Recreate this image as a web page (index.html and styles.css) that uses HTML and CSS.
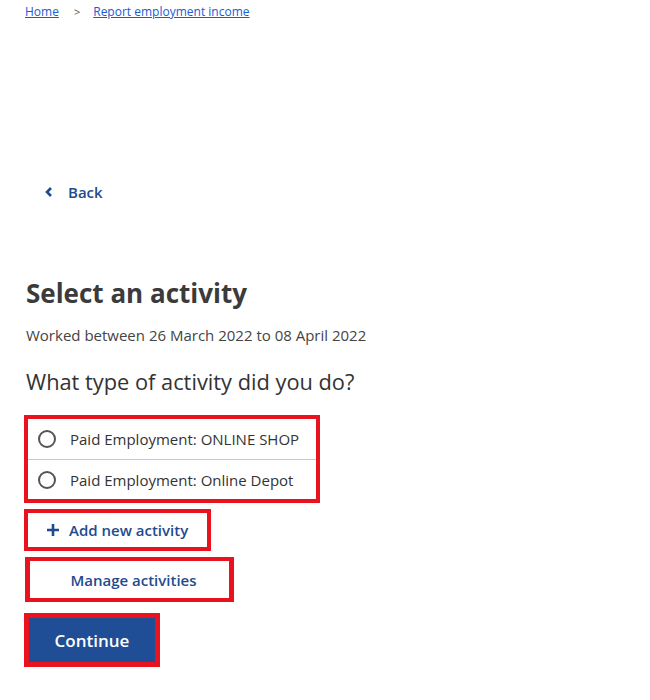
FILE: index.html
```html
<!DOCTYPE html>
<html lang="en">
<head>
<meta charset="utf-8">
<title>Select an activity</title>
<link rel="stylesheet" href="styles.css">
</head>
<body>
<nav class="breadcrumb">
  <a href="#" class="crumb">Home</a>
  <span class="sep">&gt;</span>
  <a href="#" class="crumb">Report employment income</a>
</nav>
<main class="page">
  <a href="#" class="back">
    <svg class="chev" width="10" height="12" viewBox="0 0 10 12"><path d="M7 2 L3 6 L7 10" fill="none" stroke="#1e4b8f" stroke-width="2.6" stroke-linejoin="miter"/></svg>
    <span>Back</span>
  </a>
  <h1 class="title">Select an activity</h1>
  <p class="sub">Worked between 26 March 2022 to 08 April 2022</p>
  <p class="question">What type of activity did you do?</p>
  <div class="hl hl-radios">
    <label class="option"><span class="radio"></span><span>Paid Employment: ONLINE SHOP</span></label>
    <label class="option"><span class="radio"></span><span>Paid Employment: Online Depot</span></label>
  </div>
  <div class="hl hl-add">
    <button class="link-btn add"><svg width="14" height="14" viewBox="0 0 14 14"><path d="M7 1 V13 M1 7 H13" stroke="#1e4b8f" stroke-width="2.6"/></svg><span>Add new activity</span></button>
  </div>
  <div class="hl hl-manage">
    <button class="link-btn manage">Manage activities</button>
  </div>
  <div class="hl hl-continue">
    <button class="primary">Continue</button>
  </div>
</main>
</body>
</html>
```
FILE: styles.css
```css
* { box-sizing: border-box; }
body {
  margin: 0;
  font-family: "Open Sans", "Noto Sans", sans-serif;
  color: #333;
  background: #fff;
}
.breadcrumb {
  display: flex;
  align-items: center;
  gap: 13px;
  padding: 1px 0 0 25px;
  height: 22px;
  font-size: 12px;
}
.crumb { color: #1a5bd0; text-decoration: underline; }
.crumb + .sep { margin-left: 2px; }
.sep { color: #555; font-size: 11px; }
.page {
  display: flex;
  flex-direction: column;
  align-items: flex-start;
  padding-left: 26px;
}
.back {
  display: flex;
  align-items: center;
  gap: 14px;
  margin: 159px 0 0 18px;
  color: #1e4b8f;
  font-weight: 600;
  font-size: 15px;
  text-decoration: none;
  height: 22px;
}
.title {
  margin: 73px 0 0;
  font-size: 26px;
  font-weight: 700;
  color: #3b3b3b;
  line-height: 34px;
}
.sub {
  margin: 15px 0 0;
  font-size: 15px;
  color: #444;
  line-height: 20px;
}
.question {
  margin: 24px 0 0;
  font-size: 21.8px;
  color: #333;
  line-height: 26px;
}
.hl {
  border: 4px solid #e8131f;
  margin-left: -2px;
}
.hl-radios {
  margin-top: 20px;
  width: 296px;
  display: flex;
  flex-direction: column;
}
.option {
  display: flex;
  align-items: center;
  gap: 14px;
  height: 40px;
  padding-left: 10px;
  font-size: 15px;
  color: #333;
}
.option + .option { border-top: 1px solid #c8c8c8; height: 40px; }
.radio {
  width: 18px;
  height: 18px;
  border: 2px solid #555;
  border-radius: 50%;
  flex: none;
}
.link-btn {
  font-family: inherit;
  background: #fff;
  border: none;
  color: #1e4b8f;
  font-weight: 600;
  font-size: 15px;
  display: flex;
  align-items: center;
  width: 100%;
  height: 100%;
  padding: 0;
}
.hl-add {
  margin-top: 6px;
  width: 187px;
  height: 42px;
}
.add { gap: 9px; padding-left: 18px; }
.hl-manage {
  margin-top: 6px;
  margin-left: -1px;
  width: 209px;
  height: 45px;
  border-width: 4px 5px 4px 5px;
}
.manage { justify-content: center; padding-left: 8px; }
.hl-continue {
  margin-top: 11px;
  width: 136px;
  height: 54px;
  border-width: 5px;
}
.primary {
  font-family: inherit;
  width: 100%;
  height: 100%;
  background: #1f4e96;
  color: #fff;
  border: none;
  font-weight: 600;
  font-size: 17px;
}
```
